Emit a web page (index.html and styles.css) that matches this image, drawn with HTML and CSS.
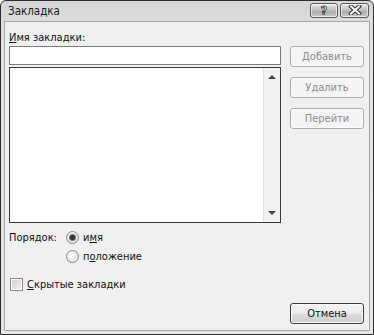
FILE: index.html
```html
<!DOCTYPE html>
<html lang="ru">
<head>
  <meta charset="UTF-8" />
  <title>Закладка</title>
  <link rel="stylesheet" href="styles.css">
</head>
<body>
  <div class="window">
    <div class="titlebar">
      <span class="title">Закладка</span>
      <div class="caption-btns">
        <span class="cap-btn">?</span>
        <span class="cap-btn cap-close">
          <svg width="14" height="10" viewBox="0 0 14 10">
            <path d="M3 1.5 L11 8.5 M11 1.5 L3 8.5" stroke="#333" stroke-width="4" stroke-linecap="square"/>
            <path d="M3 1.5 L11 8.5 M11 1.5 L3 8.5" stroke="#fff" stroke-width="2" stroke-linecap="square"/>
          </svg>
        </span>
      </div>
    </div>

    <div class="client">
      <div class="main">
        <div class="left">
          <div class="label"><u>И</u>мя закладки:</div>
          <div class="name-input"></div>
          <div class="listbox">
            <div class="scrollbar">
              <span class="arrow arrow-up"></span>
              <span class="arrow arrow-down"></span>
            </div>
          </div>

          <div class="order">
            <span class="order-label">Порядок:</span>
            <div class="radios">
              <label class="radio"><span class="dot checked"></span><span>и<u>м</u>я</span></label>
              <label class="radio"><span class="dot"></span><span>п<u>о</u>ложение</span></label>
            </div>
          </div>

          <label class="check"><span class="box"></span><span><u>С</u>крытые закладки</span></label>
        </div>

        <div class="right">
          <button class="btn" disabled>Добавить</button>
          <button class="btn" disabled>Удалить</button>
          <button class="btn" disabled>Перейти</button>
        </div>
      </div>

      <div class="footer">
        <button class="btn btn-main">Отмена</button>
      </div>
    </div>
  </div>
</body>
</html>
```

FILE: styles.css
```css
body {
  margin: 0;
  background: #fff;
  font-family: 'DejaVu Sans Condensed', 'DejaVu Sans', sans-serif;
  font-size: 11px;
  color: #111;
}

.window {
  width: 374px;
  height: 335px;
  box-sizing: border-box;
  border: 1px solid #2e2e2e;
  border-radius: 6px 6px 0 0;
  background: linear-gradient(#d6d6d6, #e2e2e2 40px, #e6e6e6);
  padding: 0 3px 3px;
  display: flex;
  flex-direction: column;
}

.titlebar {
  height: 20px;
  display: flex;
  align-items: center;
  justify-content: space-between;
  padding-left: 4px;
}

.title {
  font-size: 11.5px;
  color: #1a1a1a;
}

.caption-btns {
  display: flex;
  gap: 2px;
  margin-top: -2px;
  margin-right: 1px;
}

.cap-btn {
  width: 26px;
  height: 13px;
  border: 1px solid #5a5a5a;
  border-radius: 3px;
  background: linear-gradient(#eaeaea, #bdbdbd 50%, #a8a8a8 51%, #c8c8c8);
  box-shadow: inset 0 0 0 1px rgba(255,255,255,0.6);
  display: flex;
  align-items: center;
  justify-content: center;
  font: bold 11px 'DejaVu Sans', sans-serif;
  color: #fff;
  -webkit-text-stroke: 0.8px #333;
  line-height: 1;
}

.cap-close {
  width: 27px;
}

.client {
  flex: 1;
  background: #f0f0f0;
  border: 1px solid #a8a8a8;
  display: flex;
  flex-direction: column;
  padding: 0 5px 6px 4px;
}

.main {
  display: flex;
  gap: 9px;
}

.left {
  width: 272px;
}

.label {
  margin-top: 8px;
  height: 16px;
  line-height: 15px;
}

.name-input {
  height: 17px;
  background: #fff;
  border: 1px solid #7c7c7c;
}

.listbox {
  margin-top: 2px;
  height: 154px;
  background: #fff;
  border: 1px solid #3a3a3a;
  display: flex;
  justify-content: flex-end;
}

.scrollbar {
  width: 16px;
  background: #f2f2f2;
  border-left: 1px solid #e2e2e2;
  display: flex;
  flex-direction: column;
  justify-content: space-between;
  align-items: center;
  padding: 7px 0;
}

.arrow {
  width: 0;
  height: 0;
  border-left: 4px solid transparent;
  border-right: 4px solid transparent;
}

.arrow-up {
  border-bottom: 4px solid #444;
}

.arrow-down {
  border-top: 4px solid #444;
}

.order {
  margin-top: 7px;
  display: flex;
}

.order-label {
  width: 57px;
  line-height: 15px;
}

.radios {
  display: flex;
  flex-direction: column;
  gap: 4px;
}

.radio, .check {
  display: flex;
  align-items: center;
  gap: 4px;
  line-height: 15px;
}

.dot {
  width: 11px;
  height: 11px;
  border: 1px solid #8a8a8a;
  border-radius: 50%;
  background: radial-gradient(circle at 40% 40%, #fff, #d6d6d6);
  display: flex;
  align-items: center;
  justify-content: center;
}

.dot.checked::after {
  content: "";
  width: 5px;
  height: 5px;
  border-radius: 50%;
  background: #333;
  box-shadow: 0 0 0 1px #777;
}

.check {
  margin-top: 13px;
  margin-left: 1px;
}

.box {
  width: 11px;
  height: 11px;
  border: 1px solid #8a8a8a;
  background: linear-gradient(135deg, #d0d0d0, #f6f6f6);
  box-shadow: inset 0 0 0 1px #fff;
}

.right {
  padding-top: 24px;
  display: flex;
  flex-direction: column;
  gap: 10px;
}

.btn {
  width: 74px;
  height: 21px;
  padding: 0;
  font: 11px 'DejaVu Sans Condensed', 'DejaVu Sans', sans-serif;
  color: #8c8c8c;
  background: #f4f4f4;
  border: 1px solid #ababab;
  border-radius: 3px;
  box-shadow: inset 0 0 0 1px #fbfbfb;
}

.footer {
  margin-top: auto;
  display: flex;
  justify-content: flex-end;
}

.btn-main {
  color: #111;
  border-color: #3c3c3c;
  background: linear-gradient(#f4f4f4, #ebebeb 50%, #dcdcdc 51%, #cfcfcf);
  box-shadow: inset 0 0 0 1px #fafafa;
}
```
